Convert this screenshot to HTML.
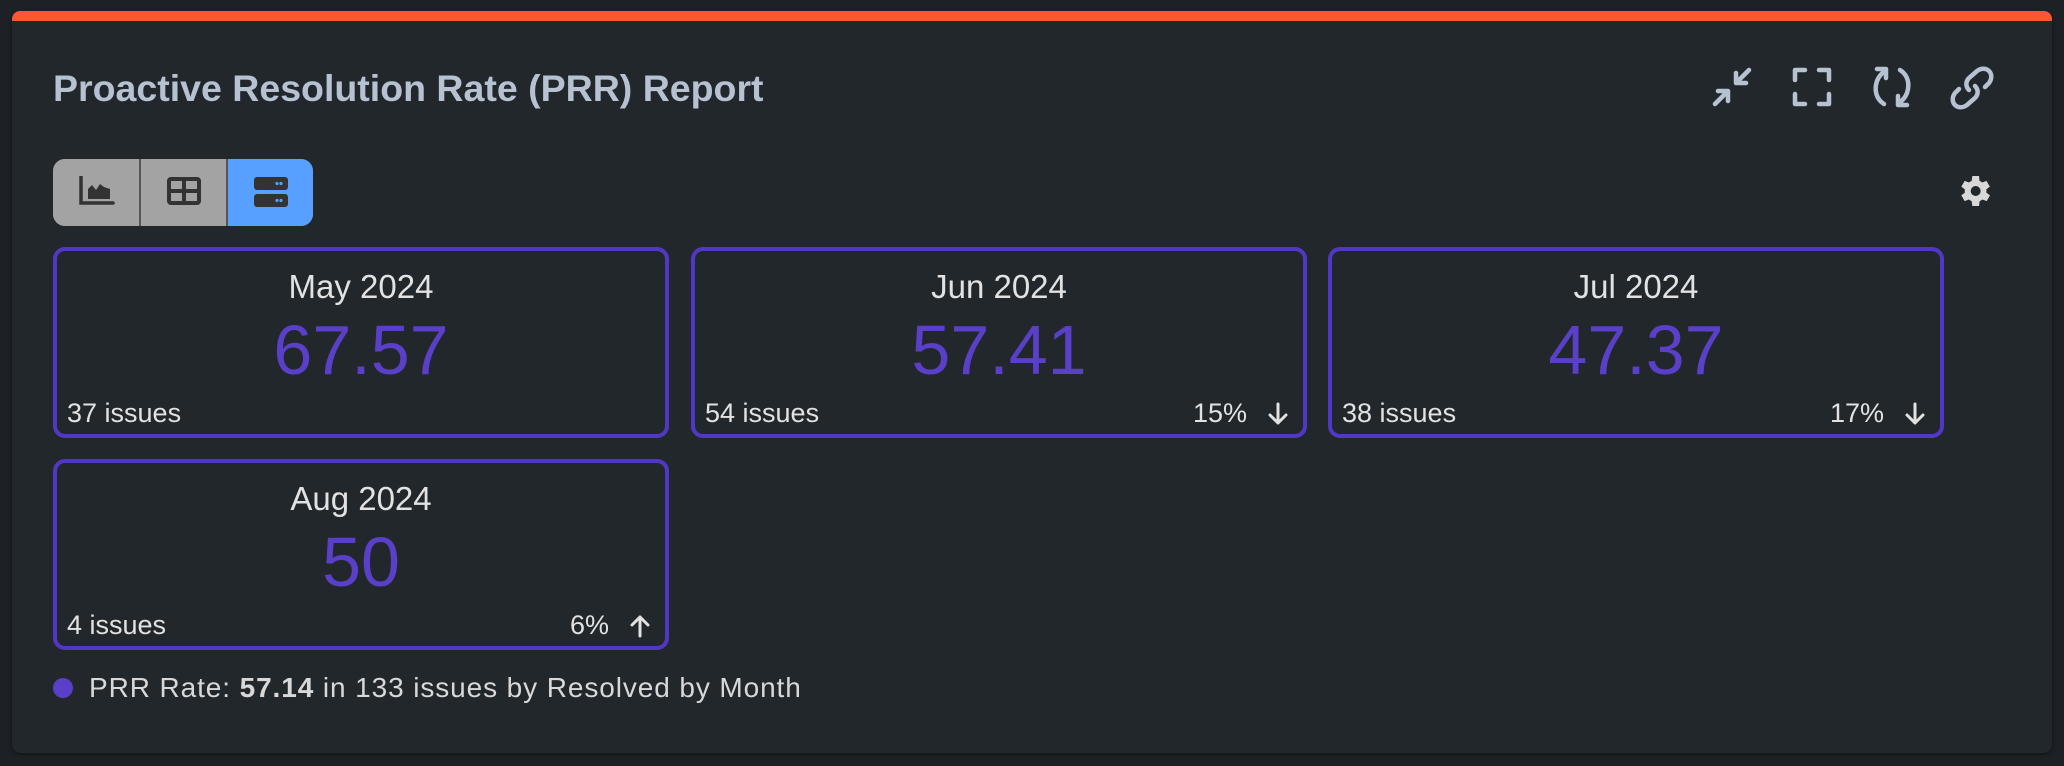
<!DOCTYPE html>
<html><head><meta charset="utf-8"><style>
*{margin:0;padding:0;box-sizing:border-box}
body{width:2064px;height:766px;background:#1d2125;position:relative;overflow:hidden;font-family:"Liberation Sans",Arial,sans-serif}
.panel{position:absolute;left:12px;top:11px;width:2040px;height:742px;background:#22272b;border-radius:8px;overflow:hidden;box-shadow:0 1px 3px rgba(0,0,0,.5)}
.bar{position:absolute;left:0;top:0;width:100%;height:10px;background:#ff5630}
.title{position:absolute;left:41px;top:56px;font-size:37.5px;font-weight:bold;color:#b6c2d2;white-space:nowrap}
.grp{position:absolute;width:260px;height:67px;border-radius:12px;overflow:hidden;background:#a3a3a3}
.seg{position:absolute;top:0;height:67px}
.card{position:absolute;width:616px;height:191px;border:4px solid #5138c4;border-radius:12px}
.mon{position:absolute;left:0;right:0;top:17px;text-align:center;font-size:33px;color:#e2e2e2}
.num{position:absolute;left:0;right:0;top:59px;text-align:center;font-size:70px;color:#5a3fc8}
.iss{position:absolute;left:10px;top:147px;font-size:27px;color:#e2e2e2}
.pct{position:absolute;right:14px;top:147px;font-size:27px;color:#e2e2e2;display:flex;align-items:center;gap:20px}
.leg{position:absolute;left:41px;top:661px;font-size:28px;letter-spacing:0.9px;color:#d8d8d8;display:flex;align-items:center}
.dot{width:20px;height:20px;border-radius:50%;background:#5a3fc8;margin-right:16px}
</style></head><body>
<div class="panel">
<div class="bar"></div>
<div class="title">Proactive Resolution Rate (PRR) Report</div>

<svg style="position:absolute;left:1700px;top:56px" width="40" height="40" viewBox="0 0 40 40" fill="none" stroke="#b6c2d2" stroke-width="4.5" stroke-linecap="round" stroke-linejoin="round">
<path d="M24 16L37 3M24 6V16H34"/><path d="M16 24L3 37M6 24H16V34"/></svg>
<svg style="position:absolute;left:1780px;top:56px" width="40" height="40" viewBox="0 0 40 40" fill="none" stroke="#b6c2d2" stroke-width="4.5" stroke-linecap="round" stroke-linejoin="round">
<path d="M3 13V3H13M27 3H37V13M37 27V37H27M13 37H3V27"/></svg>
<svg style="position:absolute;left:1860px;top:55px" width="40" height="42" viewBox="0 0 40 42" fill="none" stroke="#b6c2d2" stroke-width="4.5" stroke-linecap="round" stroke-linejoin="round">
<path d="M12 38C4 33 2 24 5 15C7 10 10 7 13 5"/><path d="M5 3H14V12"/><path d="M28 4C36 9 38 18 35 27C33 32 30 35 27 37"/><path d="M35 39H26V30"/></svg>
<svg style="position:absolute;left:1937px;top:55px" width="46" height="44" viewBox="0 0 46 44" fill="none" stroke="#b6c2d2" stroke-width="4.5" stroke-linecap="round">
<path d="M20 24C16 20 17 15 20 12L28 5C32 2 37 2 40 5C43 8 43 13 40 17L36 21"/><path d="M26 20C30 24 29 29 26 32L18 39C14 42 9 42 6 39C3 36 3 31 6 27L10 23"/></svg>
<svg style="position:absolute;left:1942px;top:160px" width="40" height="40" viewBox="0 0 24 24"><path fill="#d8d8d8" d="M19.4 13a7.5 7.5 0 0 0 0-2l2.1-1.6-2-3.5-2.5 1a7 7 0 0 0-1.7-1L15 3h-4l-.4 2.9a7 7 0 0 0-1.7 1l-2.5-1-2 3.5L6.5 11a7.5 7.5 0 0 0 0 2l-2.1 1.6 2 3.5 2.5-1a7 7 0 0 0 1.7 1L11 21h4l.4-2.9a7 7 0 0 0 1.7-1l2.5 1 2-3.5z"/><circle cx="13" cy="12" r="3" fill="#22272b"/></svg>

<div class="grp" style="left:41px;top:148px">
<div class="seg" style="left:0;width:86px;background:#a3a3a3"></div>
<div class="seg" style="left:86px;width:2px;background:#555"></div>
<div class="seg" style="left:88px;width:85px;background:#a3a3a3"></div>
<div class="seg" style="left:173px;width:2px;background:#555"></div>
<div class="seg" style="left:175px;width:85px;background:#57a0ff"></div>
<svg style="position:absolute;left:26px;top:17px" width="36" height="30" viewBox="0 0 36 30"><path d="M2 1V27H34" fill="none" stroke="#333" stroke-width="3.5" stroke-linecap="round"/><path d="M9 23V13L13 9L17 14L21 8L25 11L31 13V23Z" fill="#333"/></svg>
<svg style="position:absolute;left:113px;top:17px" width="36" height="30" viewBox="0 0 36 30"><rect x="1" y="1" width="34" height="28" rx="4" fill="#333"/><rect x="5" y="5" width="11" height="8" fill="#a3a3a3"/><rect x="20" y="5" width="11" height="8" fill="#a3a3a3"/><rect x="5" y="17" width="11" height="8" fill="#a3a3a3"/><rect x="20" y="17" width="11" height="8" fill="#a3a3a3"/></svg>
<svg style="position:absolute;left:200px;top:17px" width="36" height="31" viewBox="0 0 36 31"><rect x="1" y="1" width="34" height="13" rx="3" fill="#333"/><rect x="1" y="18" width="34" height="13" rx="3" fill="#333"/><circle cx="24" cy="7.5" r="1.6" fill="#57a0ff"/><circle cx="28" cy="7.5" r="1.6" fill="#57a0ff"/><circle cx="24" cy="24.5" r="1.6" fill="#57a0ff"/><circle cx="28" cy="24.5" r="1.6" fill="#57a0ff"/></svg>
</div>

<div class="card" style="left:41px;top:236px"><div class="mon">May 2024</div><div class="num">67.57</div><div class="iss">37 issues</div></div>
<div class="card" style="left:679px;top:236px"><div class="mon">Jun 2024</div><div class="num">57.41</div><div class="iss">54 issues</div><div class="pct">15%<svg width="22" height="24" viewBox="0 0 22 24" fill="none" stroke="#e2e2e2" stroke-width="3" stroke-linecap="round" stroke-linejoin="round"><path d="M11 2V21M3 13L11 21L19 13"/></svg></div></div>
<div class="card" style="left:1316px;top:236px"><div class="mon">Jul 2024</div><div class="num">47.37</div><div class="iss">38 issues</div><div class="pct">17%<svg width="22" height="24" viewBox="0 0 22 24" fill="none" stroke="#e2e2e2" stroke-width="3" stroke-linecap="round" stroke-linejoin="round"><path d="M11 2V21M3 13L11 21L19 13"/></svg></div></div>
<div class="card" style="left:41px;top:448px"><div class="mon">Aug 2024</div><div class="num">50</div><div class="iss">4 issues</div><div class="pct">6%<svg width="22" height="24" viewBox="0 0 22 24" fill="none" stroke="#e2e2e2" stroke-width="3" stroke-linecap="round" stroke-linejoin="round"><path d="M11 22V3M3 11L11 3L19 11"/></svg></div></div>

<div class="leg"><div class="dot"></div><span>PRR Rate: <b>57.14</b> in 133 issues by Resolved by Month</span></div>
</div>
</body></html>
